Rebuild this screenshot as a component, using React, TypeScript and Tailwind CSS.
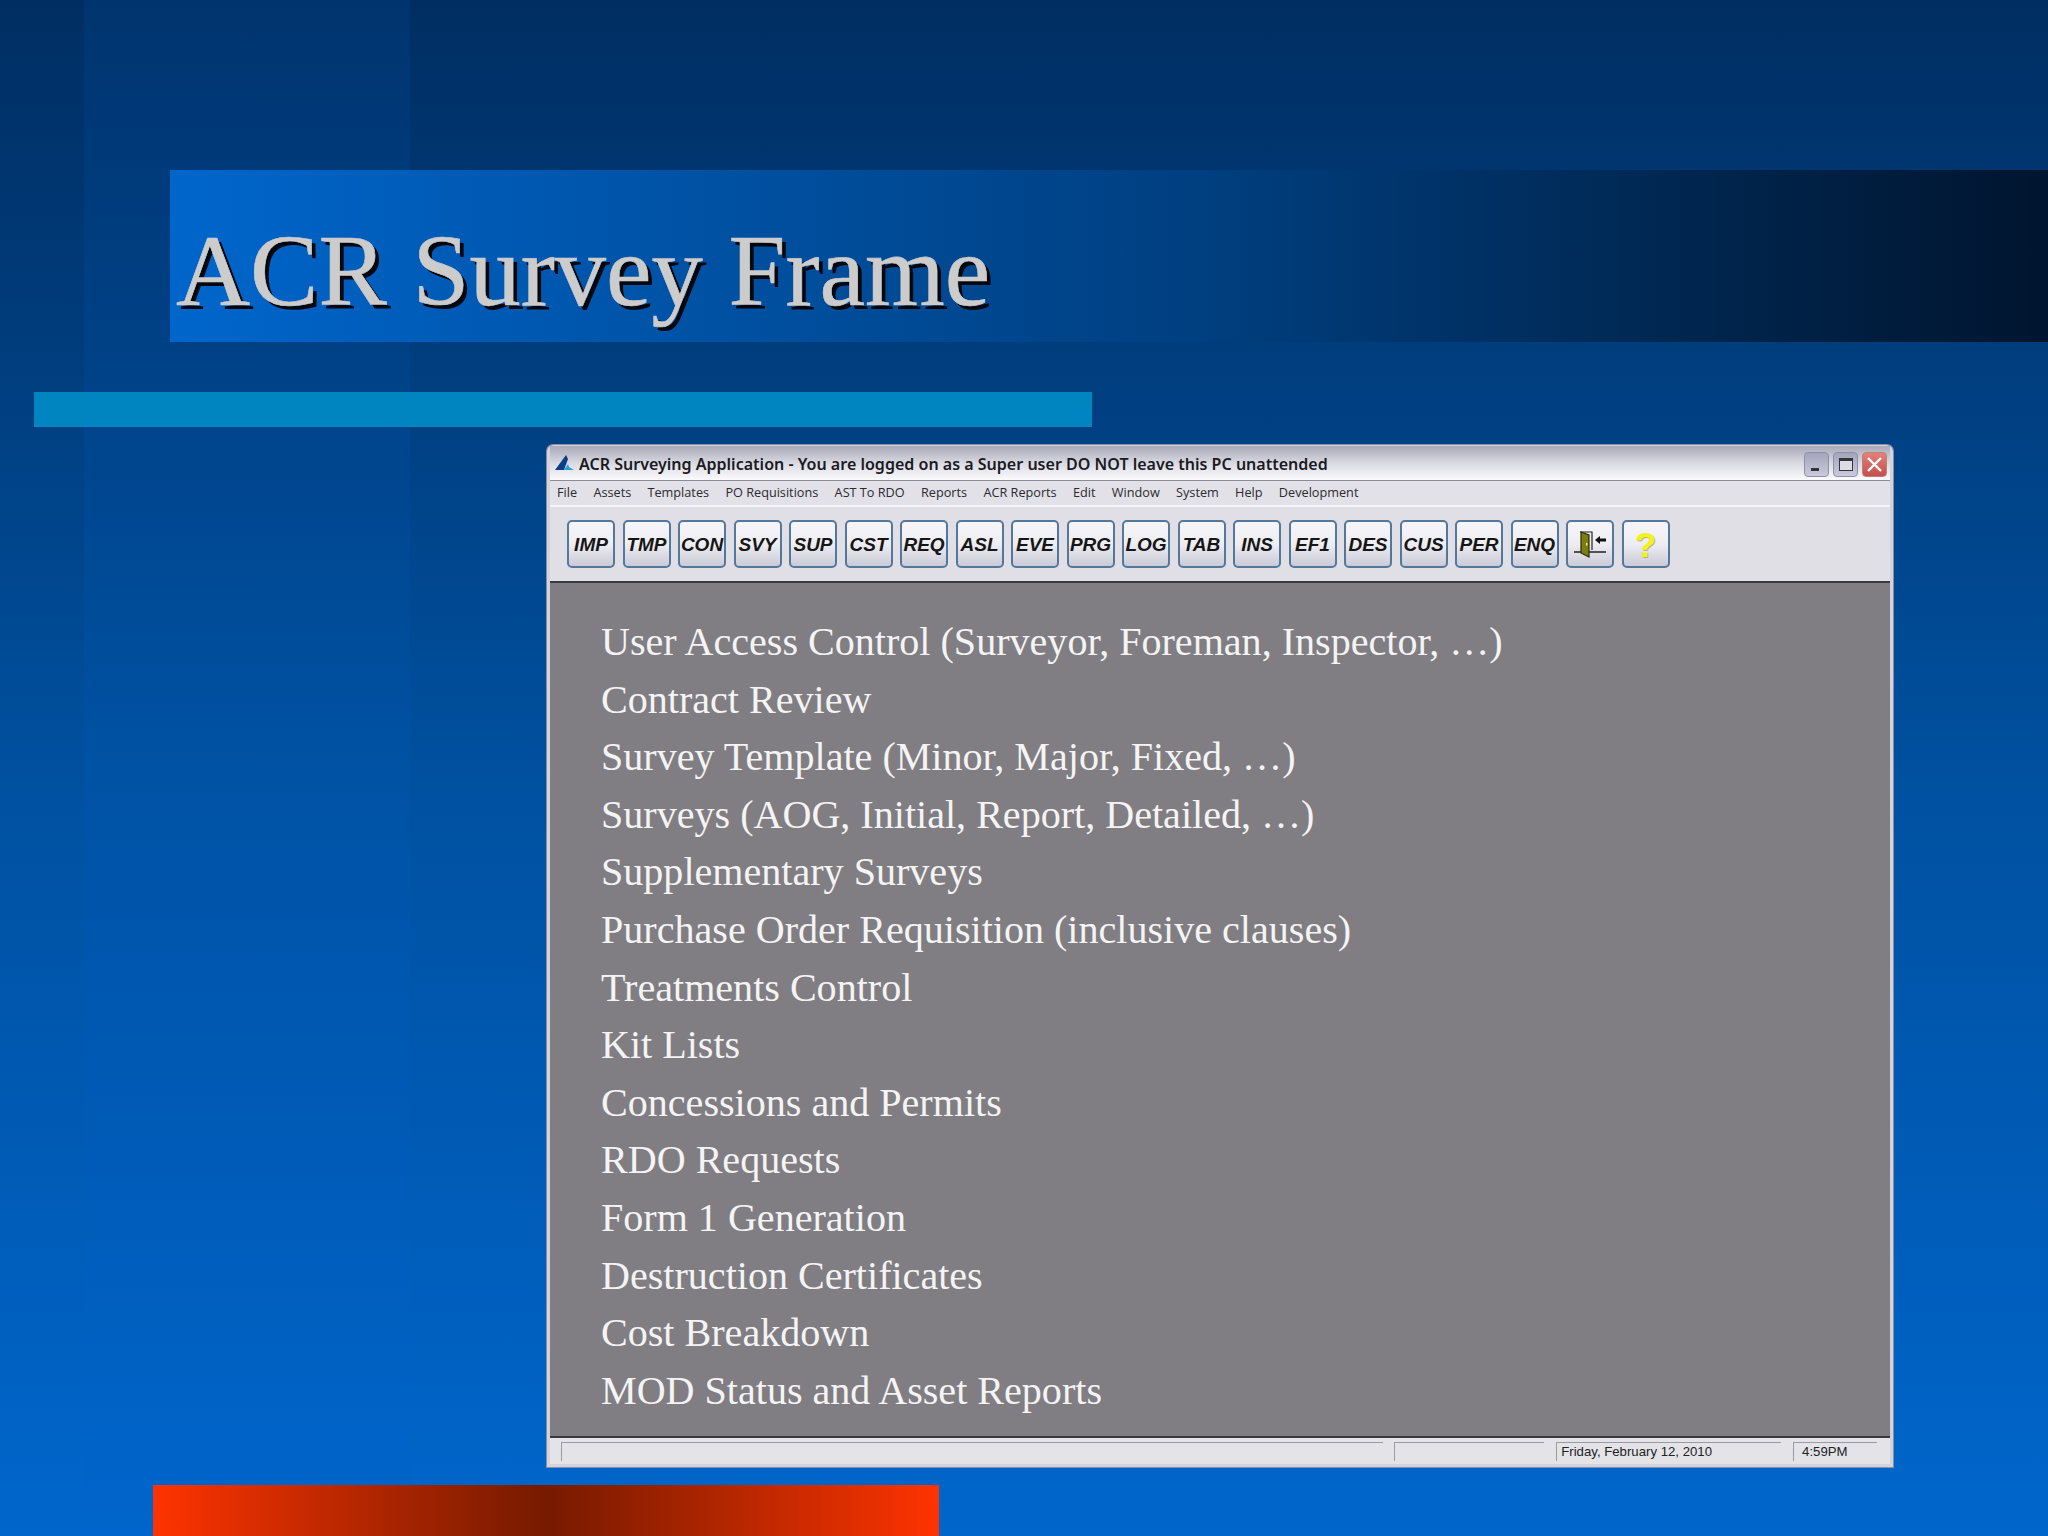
import React from "react";

const menus = ["File", "Assets", "Templates", "PO Requisitions", "AST To RDO", "Reports", "ACR Reports", "Edit", "Window", "System", "Help", "Development"];
const tools = ["IMP", "TMP", "CON", "SVY", "SUP", "CST", "REQ", "ASL", "EVE", "PRG", "LOG", "TAB", "INS", "EF1", "DES", "CUS", "PER", "ENQ"];
const lines = [
  "User Access Control (Surveyor, Foreman, Inspector, …)",
  "Contract Review",
  "Survey Template (Minor, Major, Fixed, …)",
  "Surveys (AOG, Initial, Report, Detailed, …)",
  "Supplementary Surveys",
  "Purchase Order Requisition (inclusive clauses)",
  "Treatments Control",
  "Kit Lists",
  "Concessions and Permits",
  "RDO Requests",
  "Form 1 Generation",
  "Destruction Certificates",
  "Cost Breakdown",
  "MOD Status and Asset Reports",
];

const ToolButton: React.FC<{ children: React.ReactNode }> = ({ children }) => (
  <div className="flex h-[48px] w-[48px] shrink-0 items-center justify-center rounded-[5px] border-2 border-[#54789c] bg-gradient-to-b from-[#f6f6fa] via-[#eeedf2] to-[#cbcbd8] font-['Liberation_Sans',sans-serif] text-[19px] font-bold italic leading-none text-[#161616]">
    {children}
  </div>
);

const WinButton: React.FC<{ className: string; children: React.ReactNode }> = ({ className, children }) => (
  <div className={`flex h-[25px] w-[25px] items-center justify-center rounded-[4px] border border-[#8d90a8] ${className}`}>{children}</div>
);

export default function App() {
  return (
    <div className="relative h-[1536px] w-[2048px] overflow-hidden bg-gradient-to-b from-[#002e62] via-[#00509f] to-[#0066cc] pt-[170px]">
      {/* faint vertical band of the slide template */}
      <div className="pointer-events-none absolute inset-0 flex">
        <div className="ml-[84px] h-full w-[326px] bg-[#0066cc]/12" />
      </div>

      <div className="relative ml-[170px] flex h-[172px] items-center bg-gradient-to-r from-[#0066cc] via-[#003f80] via-55% to-[#00152f] pl-[6px]">
        <h1 className="mt-[30px] font-['Liberation_Serif',serif] text-[102.5px] font-normal leading-none text-[#cccccc] [-webkit-text-stroke:0.6px_#cccccc] [text-shadow:4px_4px_0_#05070f]">ACR Survey Frame</h1>
      </div>

      <div className="relative ml-[34px] mt-[50px] h-[35px] w-[1058px] bg-[#0085c1]" />

      <div className="relative ml-[547px] mt-[18px] flex h-[1022px] w-[1346px] flex-col rounded-t-[6px] border-[3px] border-t border-[#d3d3dc] shadow-[0_0_0_1px_#8a8ca8]">
        {/* title bar */}
        <div className="flex h-[34px] items-center bg-gradient-to-b from-[#a9a9b8] via-[#d9d9e2] to-[#fbfbfd] pl-[5px] pr-[3px]">
          <svg width="20" height="16" viewBox="0 0 20 16" className="shrink-0">
            <path d="M0 15 L11 0 L13 4 L9 15 Z" fill="#0b3f86" />
            <path d="M9 15 L13 9 L14 12 L19 15 Z" fill="#2f9fd0" />
          </svg>
          <span className="ml-[4px] mt-[3px] whitespace-nowrap font-['Noto_Sans',sans-serif] text-[16.05px] font-semibold text-[#1a1a22]">ACR Surveying Application - You are logged on as a Super user DO NOT leave this PC unattended</span>
          <div className="ml-auto mt-[2px] flex gap-[4px]">
            <WinButton className="items-end bg-gradient-to-b from-[#a3a5bc] to-[#c9cada]">
              <div className="mb-[5px] mr-[3px] h-[3px] w-[8px] bg-[#33343c]" />
            </WinButton>
            <WinButton className="bg-gradient-to-b from-[#a3a5bc] to-[#c9cada]">
              <div className="h-[13px] w-[14px] border border-t-[3px] border-[#33343c] bg-[#dcdce6]" />
            </WinButton>
            <WinButton className="border-[#c0807a] bg-gradient-to-b from-[#e2817a] to-[#c34e4b]">
              <svg width="17" height="17" viewBox="0 0 17 17">
                <path d="M2 2 L15 15 M15 2 L2 15" stroke="#fff" strokeWidth="2.4" />
              </svg>
            </WinButton>
          </div>
        </div>
        <div className="h-[1px] bg-[#8b8b99]" />

        {/* menu */}
        <div className="flex h-[24px] items-center gap-[16.3px] bg-[#e2e1e7] pl-[7px] font-['Open_Sans',sans-serif] text-[12.7px] text-[#2a2a30]">
          {menus.map((m) => (
            <span key={m} className="whitespace-nowrap">{m}</span>
          ))}
        </div>
        <div className="h-[2px] bg-[#f6f6f9]" />

        {/* toolbar */}
        <div className="flex h-[74px] items-center gap-[7.5px] bg-[#e0dfe5] pl-[17px]">
          {tools.map((t) => (
            <ToolButton key={t}>{t}</ToolButton>
          ))}
          <ToolButton>
            <svg width="34" height="30" viewBox="0 0 34 30">
              <path d="M7 3 H19 V21" fill="none" stroke="#222" strokeWidth="1.2" />
              <path d="M8 3 L16 6 V28 L8 24 Z" fill="#7d7d10" stroke="#2a2a08" strokeWidth="1.2" />
              <rect x="13" y="14" width="1.5" height="2.5" fill="#f2f24a" />
              <path d="M1 23 H8 M16 23 H33" stroke="#222" strokeWidth="1.5" />
              <path d="M22 11 L27 7 V9.5 H33 V12.5 H27 V15 Z" fill="#111" />
            </svg>
          </ToolButton>
          <ToolButton>
            <span className="font-['Liberation_Sans',sans-serif] text-[35px] font-bold not-italic text-[#f4f21c] [text-shadow:1px_1px_0_#b5b56a]">?</span>
          </ToolButton>
        </div>
        <div className="h-[2px] bg-[#3a3a3e]" />

        {/* body */}
        <div className="flex-1 bg-[#807e82] pl-[51px] pt-[30px] font-['Liberation_Serif',serif] text-[40.1px] leading-[57.6px] text-[#f4f4f4]">
          {lines.map((l) => (
            <div key={l} className="whitespace-nowrap">{l}</div>
          ))}
        </div>
        <div className="h-[2px] bg-[#3a3a3e]" />

        {/* status bar */}
        <div className="flex h-[26px] items-center bg-[#e4e3e8] pl-[11px] pr-[13px] font-['Liberation_Sans',sans-serif] text-[13.2px] text-[#222]">
          <div className="h-[19px] w-[823px] border-l border-t border-[#9a9aa4]" />
          <div className="ml-[11px] h-[19px] w-[150px] border-l border-t border-[#9a9aa4]" />
          <div className="ml-[12px] flex h-[19px] w-[225px] items-center border-l border-t border-[#9a9aa4] pl-[4px]">Friday, February 12, 2010</div>
          <div className="ml-[12px] flex h-[19px] w-[84px] items-center border-l border-t border-[#9a9aa4] pl-[8px]">4:59PM</div>
        </div>
      </div>

      <div className="relative ml-[153px] mt-[18px] h-[51px] w-[786px] bg-gradient-to-r from-[#ff3300] via-[#761a00] to-[#ff3300]" />
    </div>
  );
}
